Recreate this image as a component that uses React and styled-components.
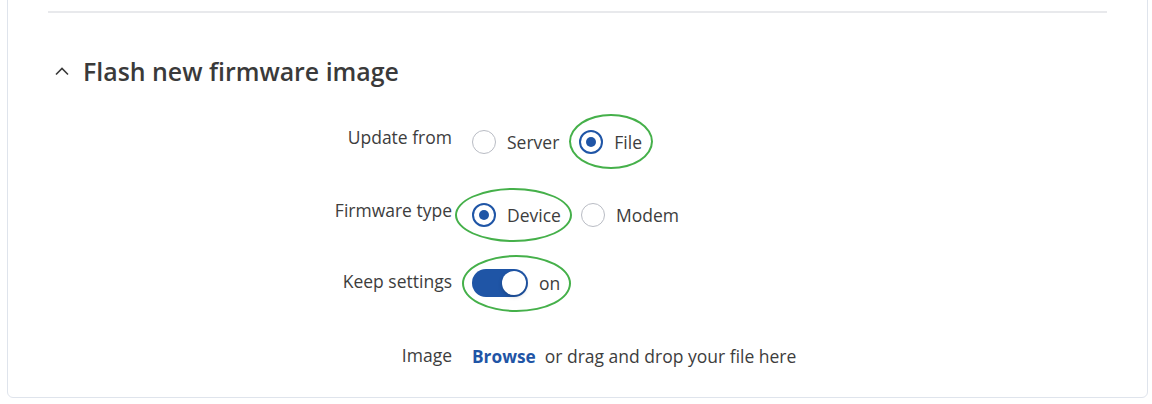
import React from "react";
import styled, { createGlobalStyle } from "styled-components";

const Global = createGlobalStyle`
  html, body { margin: 0; padding: 0; background: #ffffff; }
  body { font-family: "Open Sans", "Noto Sans", sans-serif; color: #3d3d3d; overflow: hidden; }
`;

const Page = styled.div`
  width: 1152px;
  height: 404px;
  overflow: hidden;
  padding: 0 4px 0 7px;
  box-sizing: border-box;
`;

const Card = styled.section`
  margin-top: -20px;
  height: 418px;
  box-sizing: border-box;
  border: 1px solid #dfe4ec;
  border-radius: 6px;
  padding: 30px 40px 0 40px;
  background: #fff;
`;

const Divider = styled.hr`
  margin: 0;
  border: 0;
  border-top: 2px solid #e8e9ec;
`;

const SectionHeader = styled.div`
  display: flex;
  align-items: center;
  gap: 13px;
  margin-top: 42px;
  padding-left: 6px;
`;

const Title = styled.h2`
  margin: 0;
  font-size: 24.9px;
  font-weight: 600;
  line-height: 32px;
  color: #3a3a3a;
`;

const Form = styled.div`
  display: grid;
  grid-template-columns: 404px 1fr;
  column-gap: 20px;
  margin-top: 35px;
`;

const Label = styled.div`
  text-align: right;
  font-size: 17.5px;
  line-height: 22px;
  color: #3d3d3d;
  margin-top: ${(p) => p.$mt}px;
  padding-top: ${(p) => p.$pt || 0}px;
`;

const Control = styled.div`
  display: flex;
  align-items: center;
  gap: 20px;
  height: 40px;
  margin-top: ${(p) => p.$mt}px;
`;

const Option = styled.label`
  position: relative;
  display: flex;
  align-items: center;
  gap: 11px;
  font-size: 17.5px;
  color: #3d3d3d;
`;

const Radio = styled.span`
  width: 24px;
  height: 24px;
  box-sizing: border-box;
  border-radius: 50%;
  border: ${(p) => (p.$checked ? "2px solid #1f55a6" : "1.5px solid #b9bcc4")};
  display: flex;
  align-items: center;
  justify-content: center;
  &::after {
    content: "";
    width: 10px;
    height: 10px;
    border-radius: 50%;
    background: ${(p) => (p.$checked ? "#1f55a6" : "transparent")};
  }
`;

const Track = styled.span`
  width: 56px;
  height: 28px;
  box-sizing: border-box;
  border-radius: 14px;
  background: #1f55a6;
  padding: 2px;
  display: flex;
  justify-content: flex-end;
`;

const Knob = styled.span`
  width: 24px;
  height: 24px;
  border-radius: 50%;
  background: #ffffff;
  box-shadow: 0 2px 4px rgba(0, 0, 0, 0.18);
`;

const Highlight = styled.span`
  position: absolute;
  top: ${(p) => p.$t}px;
  bottom: ${(p) => p.$b}px;
  left: ${(p) => p.$l}px;
  right: ${(p) => p.$r}px;
  border: 2px solid #45b04a;
  border-radius: 50%;
  pointer-events: none;
`;

const BrowseLink = styled.a`
  font-weight: 700;
  color: #1f55a6;
  text-decoration: none;
  font-size: 17.3px;
`;

const Hint = styled.span`
  font-size: 17.5px;
  color: #3d3d3d;
  margin-left: -11px;
`;

const Chevron = () => (
  <svg width="16" height="10" viewBox="0 0 16 10" fill="none">
    <path d="M2 8.5 L8 2.5 L14 8.5" stroke="#3a3a3a" strokeWidth="1.6" />
  </svg>
);

export default function App() {
  return (
    <>
      <Global />
      <Page>
        <Card>
          <Divider />
          <SectionHeader>
            <Chevron />
            <Title>Flash new firmware image</Title>
          </SectionHeader>
          <Form>
            <Label $mt={0} $pt={4}>Update from</Label>
            <Control $mt={0}>
              <Option>
                <Radio />
                Server
              </Option>
              <Option>
                <Radio $checked />
                File
                <Highlight $t={-16} $b={-15} $l={-10} $r={-11} />
              </Option>
            </Control>

            <Label $mt={33} $pt={4}>Firmware type</Label>
            <Control $mt={33}>
              <Option>
                <Radio $checked />
                Device
                <Highlight $t={-15} $b={-15} $l={-17} $r={-11} />
              </Option>
              <Option>
                <Radio />
                Modem
              </Option>
            </Control>

            <Label $mt={28} $pt={7}>Keep settings</Label>
            <Control $mt={28}>
              <Option>
                <Track>
                  <Knob />
                </Track>
                on
                <Highlight $t={-14} $b={-15} $l={-10} $r={-11} />
              </Option>
            </Control>

            <Label $mt={33} $pt={8}>Image</Label>
            <Control $mt={33}>
              <BrowseLink href="#">Browse</BrowseLink>
              <Hint>or drag and drop your file here</Hint>
            </Control>
          </Form>
        </Card>
      </Page>
    </>
  );
}
